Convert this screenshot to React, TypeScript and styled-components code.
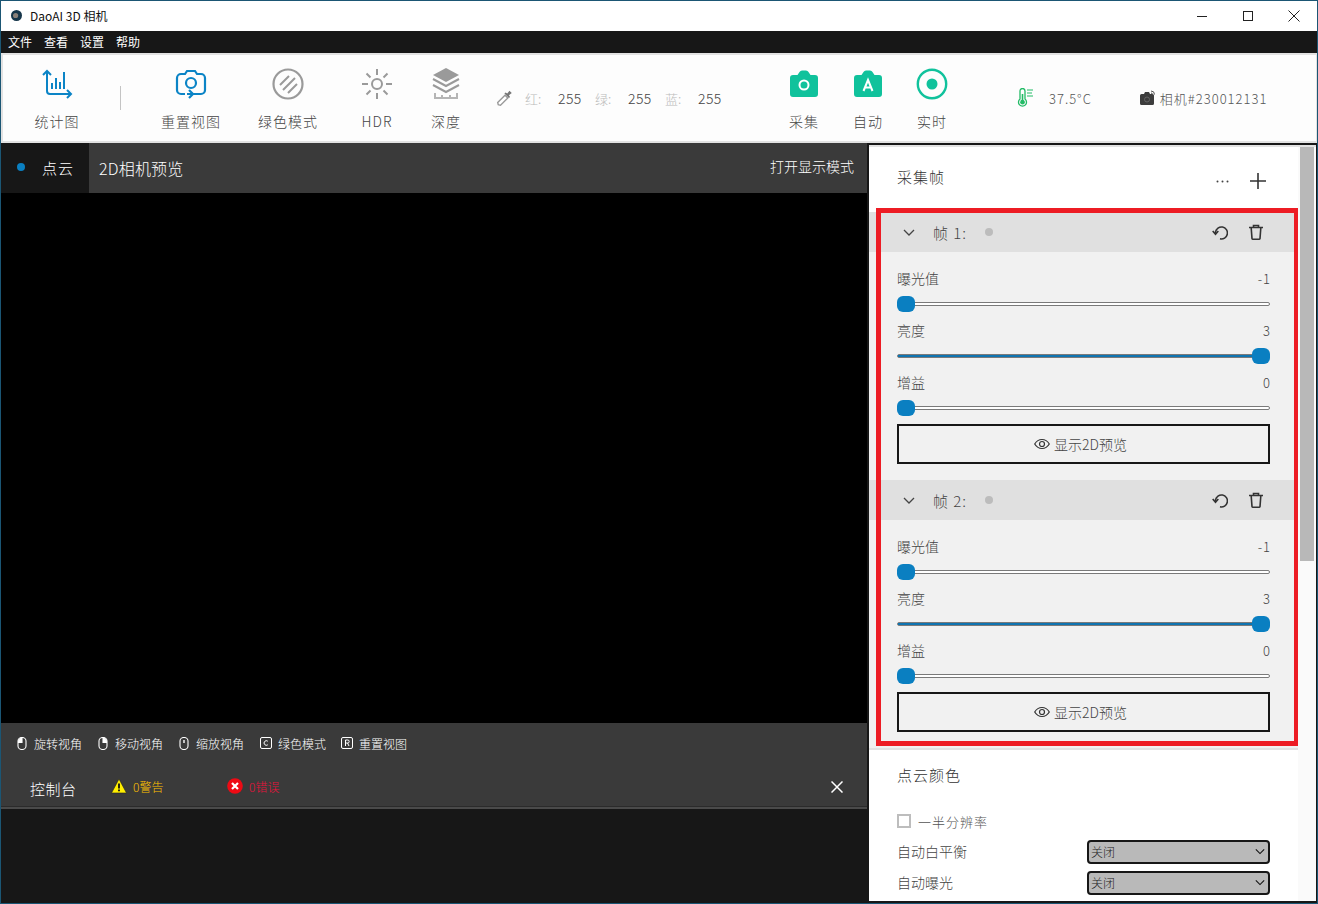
import React from "react";
import styled, { createGlobalStyle } from "styled-components";

const Global = createGlobalStyle`
  html, body { margin: 0; padding: 0; width: 1318px; height: 904px; overflow: hidden; background: #171717; }
  * { box-sizing: border-box; }
  #root { width: 1318px; height: 904px; }
  body { font-family: "Noto Sans CJK SC", "Noto Sans", sans-serif; font-weight: 300; }
`;

const Win = styled.div`
  width: 1318px; height: 904px; display: flex; flex-direction: column;
  border: 1px solid #1b5674; background: #171717; overflow: hidden;
`;
const TitleBar = styled.div`
  height: 30px; background: #fff; display: flex; align-items: center; padding-left: 9px; flex: none; color: #111;
`;
const TitleText = styled.span`
  font-size: 12px; font-weight: 400; margin-left: 7px; padding-bottom: 2px;
`;
const LogoWrap = styled.span`
  display: flex; padding-bottom: 2px;
`;
const WinBtns = styled.div`
  margin-left: auto; display: flex; align-items: center; gap: 34px; padding-right: 17px; color: #222;
`;
const MenuBar = styled.div`
  height: 22px; background: #171717; display: flex; align-items: center; padding: 0 0 2px 7px; gap: 12px; flex: none;
  color: #fff; font-size: 12px; font-weight: 400;
`;
const Toolbar = styled.div`
  height: 90px; flex: none; background: #fdfdfd; border: 2px solid #e2e2e2; border-right-width: 1px;
  display: flex; align-items: flex-start;
`;
const Tool = styled.div<{ $gap: number }>`
  width: 60px; flex: none; margin-left: ${p => p.$gap}px; display: flex; flex-direction: column; align-items: center;
  margin-top: 11px;
`;
const ToolIcon = styled.div`
  height: 36px; display: flex; align-items: center; justify-content: center;
`;
const ToolLabel = styled.div`
  margin-top: 9px; font-size: 14px; line-height: 20px; letter-spacing: 1px; color: #444; white-space: nowrap;
`;
const Sep = styled.div`
  width: 1px; height: 24px; background: #c4c4c4; margin-left: 33px; margin-top: 31px; flex: none;
`;
const Readout = styled.div<{ $gap: number }>`
  margin-left: ${p => p.$gap}px; margin-top: 32px; height: 22px; display: flex; align-items: center; flex: none;
  font-size: 14px; color: #444; white-space: nowrap;
`;
const DropperWrap = styled.span`
  display: flex; margin-right: -2px; margin-left: -1px;
`;
const Faint = styled.span`
  color: #bbb; font-size: 13px; width: 33px; margin-left: 13px; flex: none;
`;
const Num = styled.span`
  width: 24px; flex: none; letter-spacing: .4px;
`;
const Wide = styled.span<{ $ml: number }>`
  font-size: 13px; letter-spacing: 1px; color: #555; margin-left: ${p => p.$ml}px;
`;
const Main = styled.div`
  flex: 1; min-height: 0; display: flex; gap: 2px;
`;
const Left = styled.div`
  width: 866px; flex: none; display: flex; flex-direction: column; background: #3a3a3a;
`;
const Tabs = styled.div`
  height: 50px; flex: none; display: flex; align-items: stretch; background: #3a3a3a; color: #fff;
`;
const ActiveTab = styled.div`
  width: 88px; background: #171717; display: flex; align-items: center; padding: 0 0 2px 16px; font-size: 15px; letter-spacing: 1px;
`;
const TabDot = styled.span`
  width: 8px; height: 8px; border-radius: 50%; background: #0a7fc1; margin-right: 17px;
`;
const Tab = styled.div`
  padding-left: 10px; display: flex; align-items: center; font-size: 16px; letter-spacing: .2px;
`;
const TabRight = styled.div`
  margin-left: auto; padding-right: 13px; font-size: 14px; padding-top: 13px;
`;
const Canvas = styled.div`
  height: 530px; flex: none; background: #000;
`;
const Hints = styled.div`
  height: 44px; flex: none; display: flex; align-items: center; padding: 0 0 4px 16px; color: #fff; font-size: 12px;
`;
const Hint = styled.div`
  width: 81px; flex: none; display: flex; align-items: center; gap: 6px; white-space: nowrap;
`;
const ConsoleHead = styled.div`
  height: 40px; flex: none; display: flex; align-items: center; color: #fff; position: relative;
  border-bottom: 1px solid #2b2b2b;
`;
const ConsoleTitle = styled.div`
  font-size: 15px; margin-left: 29px; width: 81px; padding-top: 4px; letter-spacing: .5px;
`;
const Status = styled.div<{ $c: string; $w: number }>`
  width: ${p => p.$w}px; flex: none; display: flex; align-items: center; gap: 6px; font-size: 12px; color: ${p => p.$c};
  padding-bottom: 1px;
`;
const CloseBtn = styled.div`
  margin-left: auto; margin-right: 24px; display: flex;
`;
const Rule = styled.div`
  height: 2px; flex: none; background: #4a4a4a;
`;
const ConsoleBody = styled.div`
  flex: 1; background: #171717;
`;
const Right = styled.div`
  flex: 1; margin-top: 2px; margin-bottom: 2px; margin-right: 1px; display: flex; background: #fff; border-top: 2px solid #e2e2e2;
`;
const Content = styled.div`
  width: 429px; flex: none; position: relative; background: #fff; color: #333; overflow: hidden;
`;
const Scroll = styled.div`
  flex: 1; padding-left: 2px; padding-right: 2px; background: #fafafa;
`;
const Thumb = styled.div`
  height: 414px; background: #b8b8b8;
`;
const FramesHead = styled.div`
  height: 65px; display: flex; align-items: flex-start; padding: 20px 32px 0 28px;
`;
const SecTitle = styled.div`
  font-size: 15px; line-height: 20px; letter-spacing: 1px; color: #333;
`;
const HeadBtns = styled.div`
  margin-left: auto; display: flex; align-items: center; gap: 21px; padding-top: 6px;
`;
const Frame = styled.div`
  background: #f1f1f1;
`;
const FrameHead = styled.div`
  height: 40px; background: #e0e0e0; display: flex; align-items: center; padding: 0 35px 0 34px; color: #444;
`;
const FrameName = styled.span`
  margin-left: 18px; font-size: 15px; width: 52px; letter-spacing: 1px;
`;
const GrayDot = styled.span`
  width: 8px; height: 8px; border-radius: 50%; background: #bcbcbc;
`;
const FrameBtns = styled.div`
  margin-left: auto; display: flex; align-items: center; gap: 21px;
`;
const FrameBody = styled.div`
  padding: 16px 28px 16px;
`;
const SliderGroup = styled.div`
  margin-bottom: 6px;
`;
const SliderTop = styled.div`
  height: 20px; display: flex; justify-content: space-between; font-size: 14px; line-height: 20px; color: #444;
`;
const SliderValue = styled.span`
  font-size: 13px; line-height: 22px; letter-spacing: 1px; margin-right: -1px;
`;
const SliderRow = styled.div`
  height: 20px; margin-top: 6px; display: flex; align-items: center;
`;
const Track = styled.div`
  position: relative; flex: 1; height: 4px; border: 1px solid #7a7a7a; border-radius: 2px; background: #fff;
`;
const Fill = styled.div`
  height: 100%; background: #0f74b0;
`;
const Knob = styled.div`
  position: absolute; top: -7px; width: 18px; height: 16px; border-radius: 6px; background: #0a7fc1;
`;
const PreviewBtn = styled.div`
  height: 40px; border: 2px solid #171717; display: flex; align-items: center; justify-content: center;
  gap: 4px; padding: 0 6px 1px 0; font-size: 14px; color: #444;
`;
const Lower = styled.div`
  border-top: 2px solid #e2e2e2; padding: 15px 28px 0;
`;
const CheckRow = styled.div`
  margin-top: 26px; height: 20px; display: flex; align-items: center; font-size: 13px; color: #555; letter-spacing: 1px;
`;
const Box = styled.span`
  width: 14px; height: 14px; border: 2px solid #bdbdbd; margin-right: 7px; flex: none;
`;
const SelRow = styled.div<{ $mt: number }>`
  margin-top: ${p => p.$mt}px; height: 24px; display: flex; align-items: center; justify-content: space-between;
`;
const SelLabel = styled.span`
  font-size: 14px; color: #444; margin-bottom: 2px;
`;
const Select = styled.div`
  width: 183px; height: 24px; background: #b9b9b9; border: 2px solid #171717; border-radius: 4px;
  display: flex; align-items: center; justify-content: space-between; padding: 0 3px 1px 2px; font-size: 12px; color: #222;
`;
const Annotation = styled.div`
  position: absolute; left: 7px; top: 61px; width: 423px; height: 538px; border: 5px solid #ed1c24; pointer-events: none;
`;

const B = "#0b84c6";
const G = "#9a9a9a";
const T = "#10c29c";

const Logo = () => (
  <svg width="13" height="13" viewBox="0 0 13 13">
    <circle cx="6.500" cy="6.500" r="5.500" fill="#16364a" />
    <path d="M6 1a5.500 5.500 0 0 1 0 11 4.500 4.500 0 0 0 0-11z" fill="#2d93c8" />
    <circle cx="5.600" cy="6.500" r="2.600" fill="#8a8078" />
  </svg>
);
const Stat = () => (
  <svg width="32" height="32" viewBox="0 0 32 32" fill="none" stroke={B} strokeWidth="2">
    <path d="M2 7l4-4 4 4M6 4v19a3 3 0 0 0 3 3h21M26 22l4 4-4 4" />
    <path d="M11 21v-6M15 21V10M19 21v-7M23 21V4" />
  </svg>
);
const Reset = () => (
  <svg width="32" height="34" viewBox="0 0 32 34" fill="none" stroke={B} strokeWidth="2.200">
    <path d="M10 27H6a4 4 0 0 1-4-4V11a4 4 0 0 1 4-4h4l2-3h8l2 3h4a4 4 0 0 1 4 4v12a4 4 0 0 1-4 4H12" />
    <path d="M14 23l4 4-4 4" />
    <circle cx="16" cy="16" r="5" />
  </svg>
);
const GreenMode = () => (
  <svg width="32" height="32" viewBox="0 0 32 32" fill="none" stroke={G} strokeWidth="2.200">
    <circle cx="16" cy="16" r="14.500" />
    <path d="M8 17L17 8M11 22L23 10M16 25l9-9" strokeWidth="2" />
  </svg>
);
const Sun = () => (
  <svg width="32" height="32" viewBox="0 0 32 32" fill="none" stroke={G} strokeWidth="2">
    <circle cx="16" cy="16" r="5" />
    <path d="M16 1v6M16 25v6M1 16h6M25 16h6M5.500 5.500l4 4M22.500 22.500l4 4M5.500 26.500l4-4M22.500 9.500l4-4" />
  </svg>
);
const Layers = () => (
  <svg width="30" height="34" viewBox="0 0 30 34">
    <path d="M15 1l13 7-13 7L2 8z" fill={G} />
    <path d="M2 12l13 7 13-7M2 18l13 7 13-7" fill="none" stroke={G} strokeWidth="2" />
    <path d="M4 26v5h22v-5M11 28v3M19 28v3" fill="none" stroke="#b5b5b5" strokeWidth="2" />
  </svg>
);
const Dropper = () => (
  <svg width="18" height="18" viewBox="0 0 16 16" fill="none">
    <path d="M2 14l-.5-2L8 5.500 10.500 8 4 14.500z" stroke="#999" strokeWidth="1.200" fill="#fff" />
    <path d="M7.500 4l1-1 1.500 1 2-2.500 2 2-2.500 2 1 1.500-1 1z" fill="#777" />
  </svg>
);
const CamFill = ({ label }: { label: string }) => (
  <svg width="28" height="28" viewBox="0 0 28 28">
    <path d="M3 5h4.500l2-3a3 3 0 0 1 2.500-1.500h4A3 3 0 0 1 18.500 2l2 3H25a3 3 0 0 1 3 3v16a3 3 0 0 1-3 3H3a3 3 0 0 1-3-3V8a3 3 0 0 1 3-3z" fill={T} />
    {label === "o" ? (
      <circle cx="14" cy="15" r="4.500" fill="none" stroke="#fff" strokeWidth="2" />
    ) : (
      <path d="M9.500 21l4.500-11 4.500 11M11 17.500h6" fill="none" stroke="#fff" strokeWidth="2" />
    )}
  </svg>
);
const Live = () => (
  <svg width="32" height="32" viewBox="0 0 32 32">
    <circle cx="16" cy="16" r="14.200" fill="none" stroke={T} strokeWidth="2.400" />
    <circle cx="16" cy="16" r="5.500" fill={T} />
  </svg>
);
const Thermo = () => (
  <svg width="18" height="20" viewBox="0 0 18 20" fill="none" stroke="#22bb66" strokeWidth="1.300">
    <path d="M3 11V3a2.500 2.500 0 0 1 5 0v8a4 4 0 1 1-5 0z" />
    <circle cx="5.500" cy="14.200" r="1.700" fill="#22bb66" />
    <path d="M5.500 6v7" strokeWidth="1.600" />
    <path d="M10 2h6M10 5h5M10 8h6" strokeWidth="1.200" />
  </svg>
);
const CamDark = () => (
  <svg width="16" height="16" viewBox="0 0 16 16">
    <path d="M1.500 4H4l1-2h4l1 2h2.500A1.500 1.500 0 0 1 14 5.500v8a1.500 1.500 0 0 1-1.500 1.500h-11A1.500 1.500 0 0 1 0 13.500v-8A1.500 1.500 0 0 1 1.500 4z" fill="#3d3d3d" />
    <circle cx="7" cy="9.500" r="2.500" fill="none" stroke="#666" strokeWidth="1" />
    <path d="M11 1a3.500 3.500 0 0 1 3.500 3.500M11 3a1.500 1.500 0 0 1 1.500 1.500" fill="none" stroke="#555" strokeWidth="1" />
  </svg>
);
const Mouse = ({ side }: { side: "l" | "r" | "m" }) => (
  <svg width="11" height="13" viewBox="0 0 11 13" fill="none" stroke="#fff" strokeWidth="1.100">
    <rect x="1" y="0.500" width="8" height="12" rx="3.600" />
    {side === "l" && <path d="M1.500 5.500H5V1C3 1 1.500 2.500 1.500 5.500z" fill="#fff" />}
    {side === "r" && <path d="M8.500 5.500H5V1c2 0 3.500 1.500 3.500 4.500z" fill="#fff" />}
    {side === "m" && <path d="M5 3v3" strokeWidth="1.400" />}
  </svg>
);
const KeyIcon = ({ k }: { k: string }) => (
  <svg width="12" height="12" viewBox="0 0 12 12" fill="none" stroke="#fff" strokeWidth="1">
    <rect x="0.500" y="0.500" width="11" height="11" rx="1.500" />
    {k === "C" ? <path d="M7.800 4.200A2.300 2.300 0 1 0 7.800 7.800" /> : <path d="M4.500 9V3h2.200a1.500 1.500 0 0 1 0 3H4.500M6.500 6l1.500 3" />}
  </svg>
);
const Warn = () => (
  <svg width="16" height="16" viewBox="0 0 16 16">
    <path d="M8 1l7.500 14H.5z" fill="#ffee00" stroke="#222" strokeWidth=".6" />
    <path d="M8 5.500v5M8 11.500v1.700" stroke="#111" strokeWidth="1.800" />
  </svg>
);
const Err = () => (
  <svg width="16" height="16" viewBox="0 0 16 16">
    <circle cx="8" cy="8" r="7.800" fill="#ee0a14" />
    <path d="M5 5l6 6M11 5l-6 6" stroke="#fff" strokeWidth="2.200" />
  </svg>
);
const X = ({ s, c, w }: { s: number; c: string; w: number }) => (
  <svg width={s} height={s} viewBox="0 0 12 12" stroke={c} strokeWidth={w} fill="none"><path d="M.5.500l11 11M11.500.500l-11 11" /></svg>
);
const Chevron = ({ w, c }: { w: number; c: string }) => (
  <svg width={w} height="7" viewBox="0 0 12 7" fill="none" stroke={c} strokeWidth="1.300"><path d="M1 1l5 5 5-5" /></svg>
);
const Undo = () => (
  <svg width="16" height="16" viewBox="0 0 16 16" fill="none" stroke="#333" strokeWidth="1.600">
    <path d="M3.500 9.500V8a6 6 0 1 1 4.500 6.800" />
    <path d="M.7 7l2.800 3.300L6.300 7" />
  </svg>
);
const Trash = () => (
  <svg width="14" height="16" viewBox="0 0 14 16" fill="none" stroke="#333" strokeWidth="1.600">
    <path d="M0 3.500h14M4.500 3V1.500h5V3M2.200 4l.8 10.500a1 1 0 0 0 1 .7h6a1 1 0 0 0 1-.7L11.800 4" />
  </svg>
);
const Eye = () => (
  <svg width="16" height="12" viewBox="0 0 16 12" fill="none" stroke="#333" strokeWidth="1.200">
    <path d="M.7 6C2.500 3 5 1.500 8 1.500S13.500 3 15.300 6C13.500 9 11 10.500 8 10.500S2.500 9 .7 6z" />
    <circle cx="8" cy="6" r="2.500" />
  </svg>
);

const Slider = ({ label, value, pct }: { label: string; value: string; pct: number }) => (
  <SliderGroup>
    <SliderTop><span>{label}</span><SliderValue>{value}</SliderValue></SliderTop>
    <SliderRow>
      <Track>
        <Fill style={{ width: `${pct}%` }} />
        <Knob style={{ left: pct ? "calc(100% - 17px)" : "-1px" }} />
      </Track>
    </SliderRow>
  </SliderGroup>
);

const FrameCard = ({ n }: { n: number }) => (
  <Frame>
    <FrameHead>
      <Chevron w={12} c="#444" />
      <FrameName>帧 {n}:</FrameName>
      <GrayDot />
      <FrameBtns><Undo /><Trash /></FrameBtns>
    </FrameHead>
    <FrameBody>
      <Slider label="曝光值" value="-1" pct={0} />
      <Slider label="亮度" value="3" pct={100} />
      <Slider label="增益" value="0" pct={0} />
      <PreviewBtn><Eye />显示2D预览</PreviewBtn>
    </FrameBody>
  </Frame>
);

export default function App() {
  return (
    <Win>
      <Global />
      <TitleBar>
        <LogoWrap><Logo /></LogoWrap>
        <TitleText>DaoAI 3D 相机</TitleText>
        <WinBtns>
          <svg width="12" height="12" viewBox="0 0 12 12" stroke="#222" fill="none"><path d="M1 6.500h10" /></svg>
          <svg width="12" height="12" viewBox="0 0 12 12" stroke="#222" fill="none"><rect x="1.500" y="1.500" width="9" height="9" /></svg>
          <X s={12} c="#222" w={1} />
        </WinBtns>
      </TitleBar>
      <MenuBar><span>文件</span><span>查看</span><span>设置</span><span>帮助</span></MenuBar>
      <Toolbar>
        <Tool $gap={24}><ToolIcon><Stat /></ToolIcon><ToolLabel>统计图</ToolLabel></Tool>
        <Sep />
        <Tool $gap={40}><ToolIcon><Reset /></ToolIcon><ToolLabel>重置视图</ToolLabel></Tool>
        <Tool $gap={37}><ToolIcon><GreenMode /></ToolIcon><ToolLabel>绿色模式</ToolLabel></Tool>
        <Tool $gap={29}><ToolIcon><Sun /></ToolIcon><ToolLabel>HDR</ToolLabel></Tool>
        <Tool $gap={9}><ToolIcon><Layers /></ToolIcon><ToolLabel>深度</ToolLabel></Tool>
        <Readout $gap={21}>
          <DropperWrap><Dropper /></DropperWrap>
          <Faint>红:</Faint><Num>255</Num>
          <Faint>绿:</Faint><Num>255</Num>
          <Faint>蓝:</Faint><Num>255</Num>
        </Readout>
        <Tool $gap={52}><ToolIcon><CamFill label="o" /></ToolIcon><ToolLabel>采集</ToolLabel></Tool>
        <Tool $gap={4}><ToolIcon><CamFill label="A" /></ToolIcon><ToolLabel>自动</ToolLabel></Tool>
        <Tool $gap={4}><ToolIcon><Live /></ToolIcon><ToolLabel>实时</ToolLabel></Tool>
        <Readout $gap={55}>
          <Thermo /><Wide $ml={14}>37.5°C</Wide>
        </Readout>
        <Readout $gap={48}>
          <CamDark /><Wide $ml={4}>相机#230012131</Wide>
        </Readout>
      </Toolbar>
      <Main>
        <Left>
          <Tabs>
            <ActiveTab><TabDot />点云</ActiveTab>
            <Tab>2D相机预览</Tab>
            <TabRight>打开显示模式</TabRight>
          </Tabs>
          <Canvas />
          <Hints>
            <Hint><Mouse side="l" />旋转视角</Hint>
            <Hint><Mouse side="r" />移动视角</Hint>
            <Hint><Mouse side="m" />缩放视角</Hint>
            <Hint><KeyIcon k="C" />绿色模式</Hint>
            <Hint><KeyIcon k="R" />重置视图</Hint>
          </Hints>
          <ConsoleHead>
            <ConsoleTitle>控制台</ConsoleTitle>
            <Status $c="#ffc000" $w={116}><Warn />0警告</Status>
            <Status $c="#e8123c" $w={100}><Err />0错误</Status>
            <CloseBtn><X s={12} c="#fff" w={1.500} /></CloseBtn>
          </ConsoleHead>
          <Rule />
          <ConsoleBody />
        </Left>
        <Right>
          <Content>
            <FramesHead>
              <SecTitle>采集帧</SecTitle>
              <HeadBtns>
                <svg width="13" height="3" viewBox="0 0 13 3" fill="#444"><circle cx="1.500" cy="1.500" r="1" /><circle cx="6.500" cy="1.500" r="1" /><circle cx="11.500" cy="1.500" r="1" /></svg>
                <svg width="16" height="16" viewBox="0 0 16 16" stroke="#333" strokeWidth="1.600"><path d="M8 0v16M0 8h16" /></svg>
              </HeadBtns>
            </FramesHead>
            <FrameCard n={1} />
            <FrameCard n={2} />
            <Lower>
              <SecTitle>点云颜色</SecTitle>
              <CheckRow><Box />一半分辨率</CheckRow>
              <SelRow $mt={9}><SelLabel>自动白平衡</SelLabel><Select>关闭<Chevron w={10} c="#111" /></Select></SelRow>
              <SelRow $mt={7}><SelLabel>自动曝光</SelLabel><Select>关闭<Chevron w={10} c="#111" /></Select></SelRow>
            </Lower>
            <Annotation />
          </Content>
          <Scroll><Thumb /></Scroll>
        </Right>
      </Main>
    </Win>
  );
}
